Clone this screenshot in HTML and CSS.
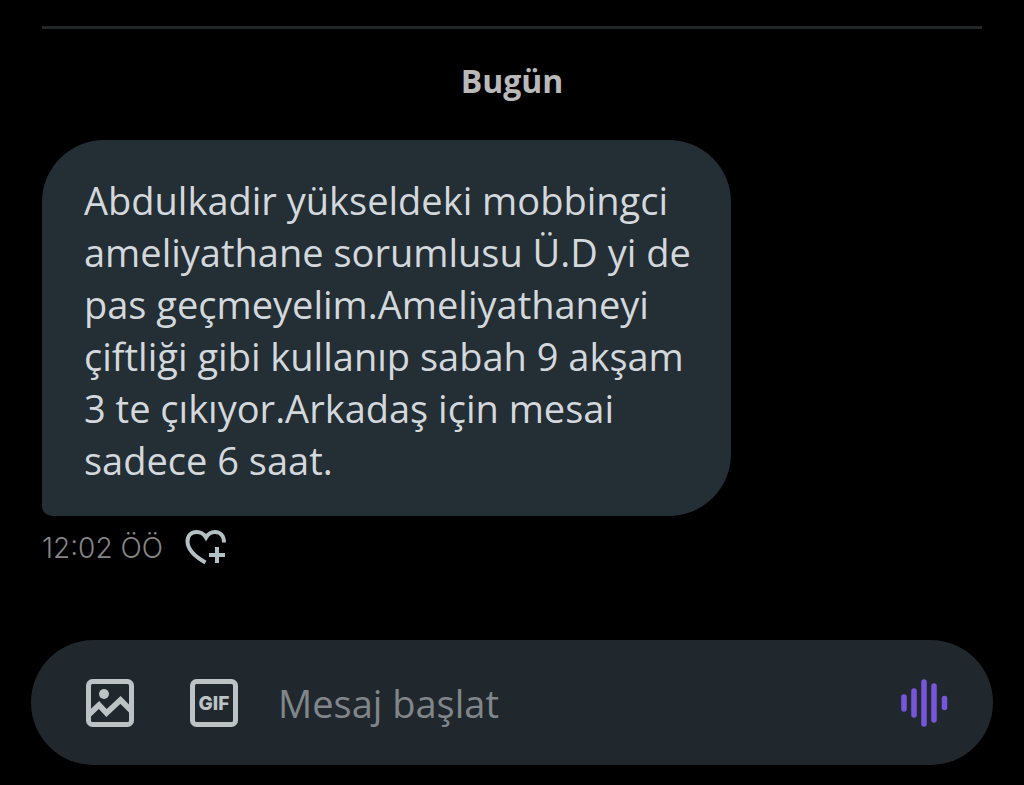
FILE: index.html
```html
<!DOCTYPE html>
<html lang="tr">
<head>
<meta charset="utf-8">
<meta name="viewport" content="width=device-width, initial-scale=1">
<title>Mesajlar</title>
<link rel="stylesheet" href="styles.css">
</head>
<body>
<main class="chat">
  <section class="thread">
    <h2 class="day">Bugün</h2>
    <article class="message">
      <p class="bubble">Abdulkadir yükseldeki mobbingci<br>ameliyathane sorumlusu Ü.D yi de<br>pas geçmeyelim.Ameliyathaneyi<br>çiftliği gibi kullanıp sabah 9 akşam<br>3 te çıkıyor.Arkadaş için mesai<br>sadece 6 saat.</p>
      <div class="meta">
        <time class="time">12:02 ÖÖ</time>
        <button class="icon-button react" type="button" aria-label="Tepki ekle">
          <svg width="42" height="38" viewBox="0 0 42 38" fill="none" stroke="currentColor">
            <path d="M20.500 33.500C9 27 2.500 20 2.500 12.500C2.500 6.500 6.500 3 11.500 3C15.500 3 19 5 21 8.500C23 5 26 3 30 3C35.500 3 39 7 39 13.500" stroke-width="4"/>
            <path d="M32 18v16M24 26h16" stroke-width="4"/>
          </svg>
        </button>
      </div>
    </article>
  </section>
  <form class="composer">
    <button class="icon-button" type="button" aria-label="Fotoğraf ekle">
      <svg width="48" height="48" viewBox="0 0 48 48" fill="none" stroke="currentColor">
        <rect x="2.500" y="2.500" width="43" height="43" rx="4" stroke-width="5"/>
        <circle cx="18" cy="15" r="5" fill="currentColor" stroke="none"/>
        <path d="M3 35.500L13 26L20.500 34L34.500 21L45 31.500" stroke-width="5.600"/>
      </svg>
    </button>
    <button class="icon-button" type="button" aria-label="GIF ekle">
      <svg width="48" height="48" viewBox="0 0 48 48" fill="none">
        <rect x="2.500" y="2.500" width="43" height="43" rx="4" stroke="currentColor" stroke-width="5"/>
        <text class="gif" x="24" y="31" text-anchor="middle">GIF</text>
      </svg>
    </button>
    <input class="field" type="text" placeholder="Mesaj başlat" aria-label="Mesaj başlat">
    <button class="icon-button voice" type="button" aria-label="Sesli mesaj">
      <svg width="48" height="48" viewBox="0 0 48 48" stroke="currentColor" stroke-width="5.500" stroke-linecap="round">
        <path d="M4 18v12M14 12v24M24 3v42M34 7v34M44.500 19.500v9"/>
      </svg>
    </button>
  </form>
</main>
</body>
</html>
```
FILE: styles.css
```css
* {
  box-sizing: border-box;
}

body {
  margin: 0;
  background: #000;
  color: #d3d8dc;
  font-family: "Open Sans", "Noto Sans", sans-serif;
}

.chat {
  display: flex;
  flex-direction: column;
  min-height: 100vh;
  padding: 26px 31px 20px;
}

.thread {
  flex: 1;
  margin: 0 11px;
  border-top: 3px solid #232626;
}

.day {
  margin: 28px 0 35px;
  color: #b9b9b9;
  font-size: 32px;
  font-weight: 700;
  line-height: 48px;
  text-align: center;
}

.bubble {
  width: fit-content;
  margin: 0;
  padding: 34px 40px 30px 42px;
  border-radius: 62px 62px 62px 10px;
  background: #242e35;
  font-size: 38px;
  line-height: 52px;
}

.meta {
  display: flex;
  align-items: center;
  gap: 22px;
  margin-top: 12px;
}

.time {
  color: #858585;
  font-family: Inter, sans-serif;
  font-size: 28px;
  font-weight: 300;
  line-height: 40px;
}

.icon-button {
  display: flex;
  flex: none;
  padding: 0;
  border: 0;
  background: none;
  color: #bdc2c5;
}

.react {
  color: #b3c1c5;
}

.composer {
  display: flex;
  align-items: center;
  gap: 56px;
  height: 125px;
  padding: 0 45px 0 55px;
  border-radius: 63px;
  background: #20282e;
}

.field {
  flex: 1;
  min-width: 0;
  margin-left: -16px;
  padding: 0;
  border: 0;
  outline: 0;
  background: none;
  color: #d3d8dc;
  font: 38px/52px "Open Sans", "Noto Sans", sans-serif;
}

.field::placeholder {
  color: #81868a;
  opacity: 1;
}

.gif {
  fill: currentColor;
  font-family: Inter, sans-serif;
  font-size: 19px;
  font-weight: 800;
}

.voice {
  color: #7856dc;
}
```
